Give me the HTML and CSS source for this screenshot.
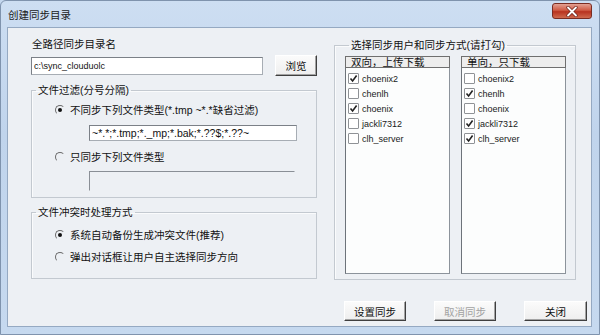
FILE: index.html
```html
<!DOCTYPE html>
<html lang="zh-CN">
<head>
    <meta charset="UTF-8">
    <title>创建同步目录</title>
    <link rel="stylesheet" href="styles.css">
</head>
<body>
    <div class="window">
        <div class="titlebar">
            <span class="title">创建同步目录</span>
            <button class="close" type="button">
                <svg width="14" height="11" viewBox="0 0 14 11">
                    <path d="M3 1.5 L11 9.5 M11 1.5 L3 9.5" stroke="#6b2018" stroke-width="3.2" stroke-linecap="round"/>
                    <path d="M3 1.5 L11 9.5 M11 1.5 L3 9.5" stroke="#fff" stroke-width="1.8" stroke-linecap="round"/>
                </svg>
            </button>
        </div>

        <div class="client">
            <div class="left">
                <div class="label">全路径同步目录名</div>
                <div class="path-row">
                    <input type="text" class="edit path" value="c:\sync_clouduolc">
                    <button type="button" class="btn browse">浏览</button>
                </div>

                <fieldset class="group filter">
                    <legend>文件过滤(分号分隔)</legend>
                    <div class="radio-row first"><span class="radio checked"></span>不同步下列文件类型(*.tmp ~*.*缺省过滤)</div>
                    <input type="text" class="edit pattern" value="~*.*;*.tmp;*._mp;*.bak;*.??$;*.??~">
                    <div class="radio-row second"><span class="radio"></span>只同步下列文件类型</div>
                    <div class="edit disabled"></div>
                </fieldset>

                <fieldset class="group conflict">
                    <legend>文件冲突时处理方式</legend>
                    <div class="radio-row first"><span class="radio checked"></span>系统自动备份生成冲突文件(推荐)</div>
                    <div class="radio-row second"><span class="radio"></span>弹出对话框让用户自主选择同步方向</div>
                </fieldset>
            </div>

            <div class="right">
                <fieldset class="group users">
                    <legend>选择同步用户和同步方式(请打勾)</legend>
                    <div class="lists">
                        <div class="list">
                            <div class="list-head">双向，上传下载</div>
                            <div class="item"><span class="check on"></span>choenix2</div>
                            <div class="item"><span class="check"></span>chenlh</div>
                            <div class="item"><span class="check on"></span>choenix</div>
                            <div class="item"><span class="check"></span>jackli7312</div>
                            <div class="item"><span class="check"></span>clh_server</div>
                        </div>
                        <div class="list">
                            <div class="list-head">单向，只下载</div>
                            <div class="item"><span class="check"></span>choenix2</div>
                            <div class="item"><span class="check on"></span>chenlh</div>
                            <div class="item"><span class="check"></span>choenix</div>
                            <div class="item"><span class="check on"></span>jackli7312</div>
                            <div class="item"><span class="check on"></span>clh_server</div>
                        </div>
                    </div>
                </fieldset>

                <div class="actions">
                    <button type="button" class="btn">设置同步</button>
                    <button type="button" class="btn" disabled>取消同步</button>
                    <button type="button" class="btn close-btn">关闭</button>
                </div>
            </div>
        </div>
    </div>
</body>
</html>
```

FILE: styles.css
```css
* {
    margin: 0;
    padding: 0;
    box-sizing: border-box;
    font-family: 'Liberation Sans', 'Noto Sans CJK SC', sans-serif;
}

body {
    width: 600px;
    height: 335px;
    overflow: hidden;
    background: #c4d7ee;
}

.window {
    width: 600px;
    height: 335px;
    background: linear-gradient(to bottom, #cddef2, #c0d4ec 40%, #c6d9ef);
    border: 1px solid #7f93ad;
    border-radius: 6px 6px 0 0;
}

.titlebar {
    height: 26px;
    display: flex;
    align-items: center;
    justify-content: space-between;
    padding-left: 7px;
}

.title {
    font-size: 10.5px;
    line-height: 12px;
    color: #1a1a1a;
    margin-top: 1px;
}

.close {
    align-self: flex-start;
    width: 40px;
    height: 16px;
    margin: 2px 7px 0 0;
    border: 1px solid #7a2c22;
    border-radius: 3px;
    background: linear-gradient(to bottom, #e3a193, #cf5a44 45%, #b8321f 55%, #cf6a4e);
    display: flex;
    align-items: center;
    justify-content: center;
}

.client {
    margin: 0 7px 0 6px;
    height: 300px;
    border: 1px solid #95a9c2;
    background: #edf0f4;
    display: flex;
    padding: 10px 0 0 23px;
    font-size: 10.5px;
    color: #111;
}

.left {
    width: 286px;
}

.label {
    line-height: 12px;
    padding-left: 1px;
}

.path-row {
    margin-top: 5px;
    height: 21px;
    display: flex;
    align-items: center;
    justify-content: space-between;
}

.edit {
    display: block;
    border: 1px solid #a7adb4;
    border-top-color: #7b8087;
    border-left-color: #7b8087;
    background: #fff;
    color: #111;
    padding: 0 2px;
    outline: none;
}

.path {
    width: 232px;
    height: 18px;
    font-size: 9px;
}

.pattern {
    width: 208px;
    height: 16px;
    margin: 8px 0 0 57px;
    font-size: 10.5px;
}

.disabled {
    width: 206px;
    height: 20px;
    margin: 7px 0 0 57px;
    background: transparent;
    border-color: #8a8f96 transparent transparent #8a8f96;
}

.btn {
    height: 21px;
    font-size: 10.5px;
    color: #111;
    background: linear-gradient(to bottom, #fbfbfb, #eeeeee);
    border: 1px solid #fff;
    border-right-color: #3f3f3f;
    border-bottom-color: #3f3f3f;
    box-shadow: inset -1px -1px #a3a3a3;
}

.btn:disabled {
    color: #a2a2a2;
}

.browse {
    width: 42px;
}

.group {
    border: 1px solid #c3c9d0;
    box-shadow: inset 1px 1px #fafbfc;
}

.group legend {
    margin-left: 4px;
    padding: 0 2px;
    line-height: 12px;
    font-size: 10.5px;
}

.filter {
    margin-top: 8px;
    padding-bottom: 6px;
}

.conflict {
    margin-top: 8px;
    padding-bottom: 14px;
}

.radio-row {
    display: flex;
    align-items: center;
    height: 14px;
    line-height: 14px;
    padding-left: 23px;
}

.filter .first { margin-top: 7px; }
.filter .second { margin-top: 9px; }
.conflict .first { margin-top: 10px; }
.conflict .second { margin-top: 8px; }

.radio {
    width: 10px;
    height: 10px;
    margin-right: 5px;
    border-radius: 50%;
    border: 1px solid;
    border-color: #6a6a6a transparent transparent #6a6a6a;
    display: flex;
    align-items: center;
    justify-content: center;
}

.radio.checked::after {
    content: '';
    width: 4px;
    height: 4px;
    border-radius: 50%;
    background: #111;
}

.right {
    width: 254px;
    margin-left: 17px;
}

.users {
    margin: 1px 12px 0 0;
    padding: 0 9px 5px 10px;
}

.lists {
    margin-top: 5px;
    display: flex;
    gap: 11px;
}

.list {
    width: 105px;
    height: 218px;
    border: 1px solid #8c939b;
    border-left-color: #6d737a;
    border-top-color: #6d737a;
    background: #fcfdfd;
}

.list-head {
    height: 12px;
    margin: -1px -1px 0 -1px;
    border: 1px solid #6f6f6f;
    background: #ededed;
    padding-left: 5px;
    line-height: 10px;
    font-size: 10.5px;
    margin-bottom: 3px;
}

.item {
    height: 15px;
    display: flex;
    align-items: center;
    padding-left: 2px;
    font-size: 9px;
    color: #1a1a1a;
}

.check {
    width: 11px;
    height: 11px;
    margin-right: 3px;
    border: 1px solid #8f9296;
    border-radius: 1px;
    background: #fff;
}

.check.on {
    background: #fff url("data:image/svg+xml;utf8,<svg xmlns='http://www.w3.org/2000/svg' width='9' height='9'><path d='M1.5 4.5 L3.6 7 L7.6 1.6' fill='none' stroke='%23222' stroke-width='1.6'/></svg>") no-repeat center;
}

.actions {
    margin-top: 21px;
    padding: 0 1px 0 10px;
    display: flex;
    justify-content: space-between;
}

.actions .btn {
    width: 62px;
    height: 20px;
}

.actions .close-btn {
    width: 63px;
}
```
